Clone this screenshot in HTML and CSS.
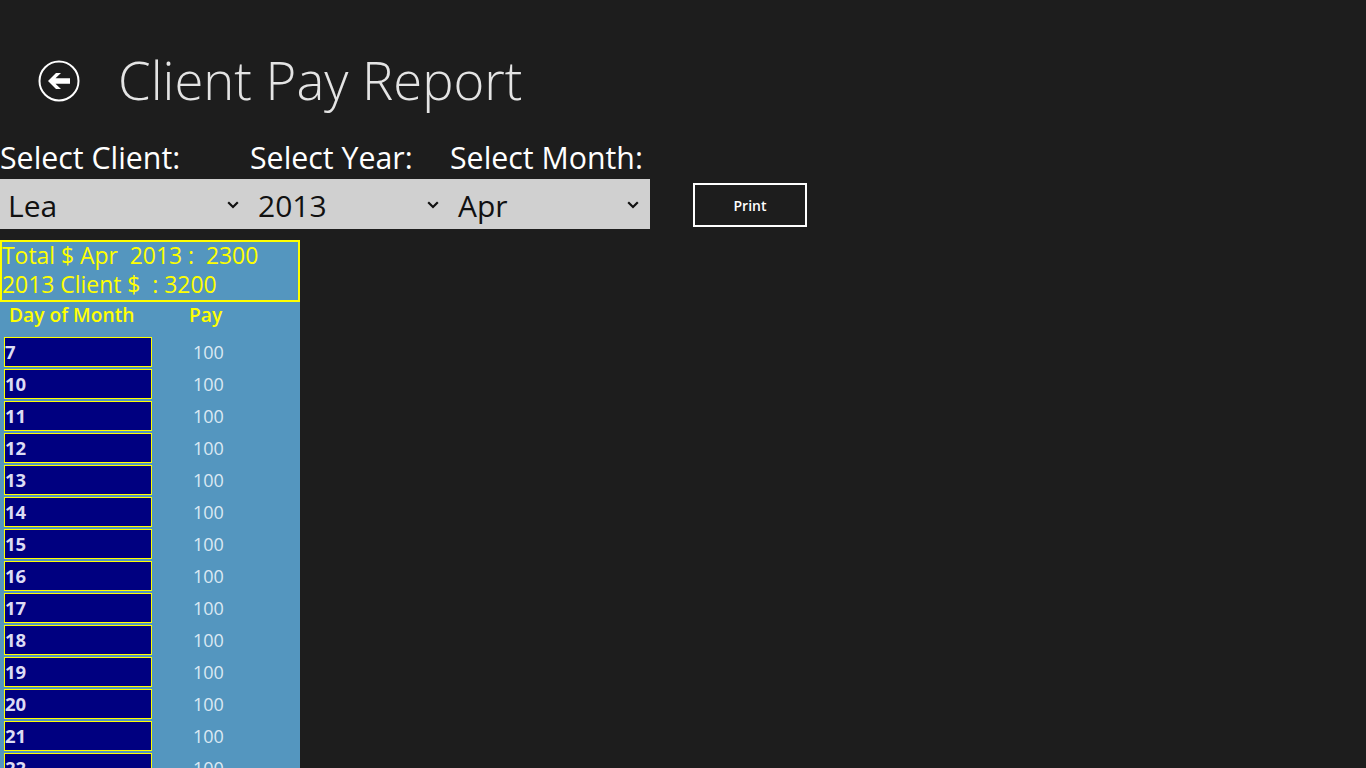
FILE: index.html
```html
<!DOCTYPE html>
<html lang="en">
<head>
<meta charset="utf-8">
<title>Client Pay Report</title>
<link rel="stylesheet" href="styles.css">
</head>
<body>
<header class="header">
  <svg class="back" width="42" height="42" viewBox="0 0 42 42" aria-label="Back">
    <circle cx="21" cy="21" r="19.5" fill="none" stroke="#fff" stroke-width="2"/>
    <path d="M10 21 L18 13 H23 L17.5 18.3 H32 V23.7 H17.5 L23 29 H18 Z" fill="#fff"/>
  </svg>
  <h1 class="title">Client Pay Report</h1>
</header>
<div class="labels">
  <div class="label c1">Select Client:</div>
  <div class="label c2">Select Year:</div>
  <div class="label c3">Select Month:</div>
</div>
<div class="controls">
  <div class="select c1"><span>Lea</span><svg class="chev" width="12" height="8" viewBox="0 0 12 8"><path d="M1.2 1.2 L6 6 L10.8 1.2" fill="none" stroke="#111" stroke-width="2.2"/></svg></div>
  <div class="select c2"><span>2013</span><svg class="chev" width="12" height="8" viewBox="0 0 12 8"><path d="M1.2 1.2 L6 6 L10.8 1.2" fill="none" stroke="#111" stroke-width="2.2"/></svg></div>
  <div class="select c3"><span>Apr</span><svg class="chev" width="12" height="8" viewBox="0 0 12 8"><path d="M1.2 1.2 L6 6 L10.8 1.2" fill="none" stroke="#111" stroke-width="2.2"/></svg></div>
  <button class="print">Print</button>
</div>
<section class="panel">
  <div class="summary">
    <div>Total $ Apr&nbsp; 2013 :&nbsp; 2300</div>
    <div>2013 Client $&nbsp; : 3200</div>
  </div>
  <div class="cols"><span class="col-day">Day of Month</span><span class="col-pay">Pay</span></div>
  <div class="rows">
    <div class="row"><div class="day">7</div><div class="pay">100</div></div>
    <div class="row"><div class="day">10</div><div class="pay">100</div></div>
    <div class="row"><div class="day">11</div><div class="pay">100</div></div>
    <div class="row"><div class="day">12</div><div class="pay">100</div></div>
    <div class="row"><div class="day">13</div><div class="pay">100</div></div>
    <div class="row"><div class="day">14</div><div class="pay">100</div></div>
    <div class="row"><div class="day">15</div><div class="pay">100</div></div>
    <div class="row"><div class="day">16</div><div class="pay">100</div></div>
    <div class="row"><div class="day">17</div><div class="pay">100</div></div>
    <div class="row"><div class="day">18</div><div class="pay">100</div></div>
    <div class="row"><div class="day">19</div><div class="pay">100</div></div>
    <div class="row"><div class="day">20</div><div class="pay">100</div></div>
    <div class="row"><div class="day">21</div><div class="pay">100</div></div>
    <div class="row"><div class="day">22</div><div class="pay">100</div></div>
  </div>
</section>
</body>
</html>
```
FILE: styles.css
```css
* { box-sizing: border-box; }
html, body { margin: 0; height: 768px; overflow: hidden; }
body { background: #1d1d1d; color: #fff; font-family: "Open Sans", "Noto Sans", sans-serif; }
.header { height: 140px; display: flex; align-items: flex-start; padding: 60px 0 0 38px; }
.back { flex: none; }
.title { margin: -15px 0 0 38px; font-size: 52.6px; line-height: 70px; font-weight: 300; color: #e4e4e4; white-space: nowrap; }
.labels { display: flex; height: 39px; }
.label { font-size: 30.3px; line-height: 35px; white-space: nowrap; }
.c1 { width: 250px; }
.c2, .c3 { width: 200px; }
.controls { display: flex; align-items: center; height: 50px; }
.select { height: 50px; background: #d0d0d0; color: #111; display: flex; align-items: center; justify-content: space-between; padding: 2px 11px 0 8px; font-size: 30px; }
.chev { flex: none; }
.print { margin: 2px 0 0 43px; width: 114px; height: 44px; background: transparent; border: 2px solid #fff; color: #fff; font: 600 14px "Open Sans", sans-serif; }
.panel { width: 300px; height: 528px; margin-top: 11px; background: #5496bf; overflow: hidden; }
.summary { height: 62px; border: 2px solid #ff0; color: #ff0; font-size: 22.9px; line-height: 29px; margin: 0; white-space: nowrap; }
.summary div:first-child { margin-top: -1px; }
.cols { height: 35px; display: flex; color: #ff0; font-weight: 600; font-size: 19.2px; line-height: 26px; }
.col-day { margin-left: 9px; width: 180px; }
.rows { display: flex; flex-direction: column; gap: 2px; }
.row { display: flex; flex: none; height: 30px; align-items: center; }
.day { margin-left: 4px; width: 148px; height: 30px; background: #000080; border: 1px solid #ff0; color: #dcdcf4; font: 700 18.5px/28px "Open Sans", sans-serif; }
.pay { margin: -1px 0 0 41px; font-size: 18px; color: #dbe9f3; }
```
